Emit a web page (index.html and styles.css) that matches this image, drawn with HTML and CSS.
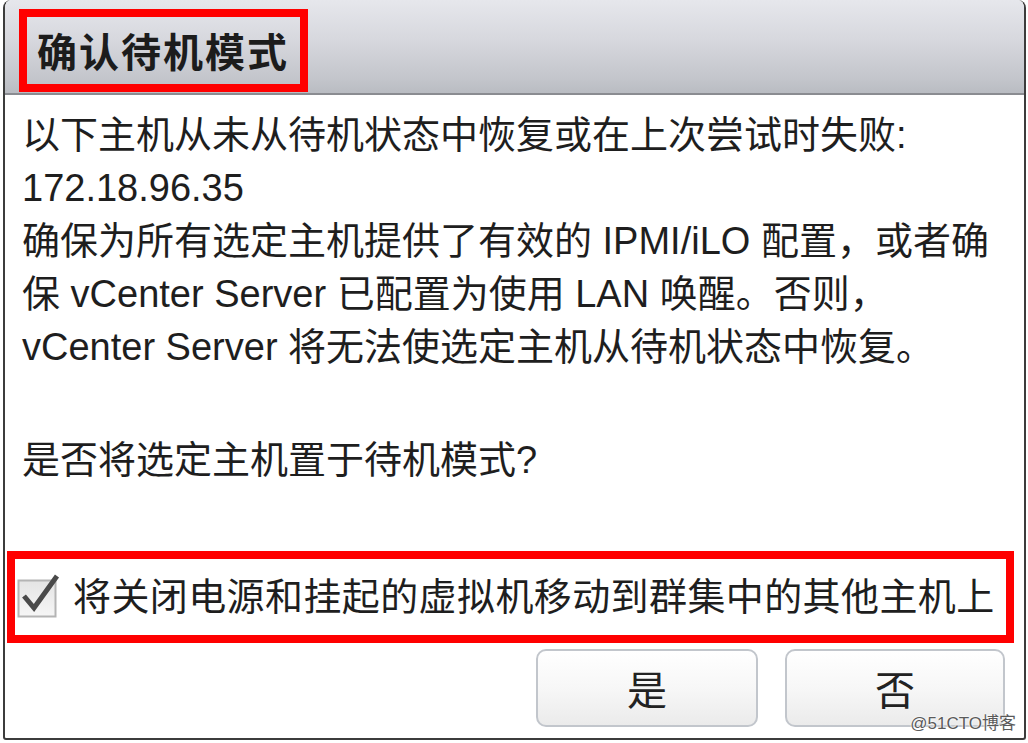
FILE: index.html
```html
<!DOCTYPE html>
<html lang="zh-CN">
<head>
<meta charset="utf-8">
<title>确认待机模式</title>
<link rel="stylesheet" href="styles.css">
</head>
<body>
<div class="window">
  <div class="titlebar">
    <div class="title-box">确认待机模式</div>
  </div>
  <div class="content">
    <div class="message">
      <div class="line">以下主机从未从待机状态中恢复或在上次尝试时失败:</div>
      <div class="line">172.18.96.35</div>
      <div class="line">确保为所有选定主机提供了有效的 IPMI/iLO 配置，或者确</div>
      <div class="line">保 vCenter Server 已配置为使用 LAN 唤醒。否则，</div>
      <div class="line">vCenter Server 将无法使选定主机从待机状态中恢复。</div>
    </div>
    <div class="question line">是否将选定主机置于待机模式?</div>
    <div class="check-box">
      <svg class="checkbox" width="44" height="46" viewBox="0 0 44 46">
        <defs>
          <linearGradient id="cbg" x1="0" y1="0" x2="0" y2="1">
            <stop offset="0" stop-color="#e4e4e4"/>
            <stop offset="1" stop-color="#f6f6f6"/>
          </linearGradient>
        </defs>
        <rect x="1.5" y="8.5" width="37" height="36" fill="url(#cbg)" stroke="#b4b4b4" stroke-width="2"/>
        <path d="M7 24 L17 36 L40 4" fill="none" stroke="#4a4a4a" stroke-width="5" stroke-linejoin="miter"/>
      </svg>
      <span class="check-label">将关闭电源和挂起的虚拟机移动到群集中的其他主机上</span>
    </div>
    <div class="buttons">
      <button class="btn btn-yes">是</button>
      <button class="btn btn-no">否</button>
    </div>
  </div>
  <div class="watermark">@51CTO博客</div>
</div>
</body>
</html>
```
FILE: styles.css
```css
html, body {
  margin: 0;
  padding: 0;
  background: #ffffff;
}
body {
  width: 1028px;
  height: 743px;
  overflow: hidden;
  font-family: "Liberation Sans", "Noto Sans CJK SC", sans-serif;
  color: #1e1e1e;
}
.window {
  position: relative;
  box-sizing: border-box;
  margin-left: 3px;
  width: 1023px;
  height: 740px;
  border: 2px solid #3c3c3c;
  border-top: none;
  border-radius: 8px 8px 3px 3px;
  background: #ffffff;
  display: flex;
  flex-direction: column;
  overflow: hidden;
}
.titlebar {
  height: 95px;
  flex: none;
  box-sizing: border-box;
  border-bottom: 2px solid #8a8c91;
  background: linear-gradient(#e6e7ec 0%, #d6d7dd 45%, #c3c5cb 85%, #b9bcc2 100%);
  padding-left: 14px;
  padding-top: 9px;
}
.title-box {
  box-sizing: border-box;
  width: 289px;
  height: 83px;
  border: 8px solid #ff0000;
  padding-left: 10px;
  font-weight: bold;
  font-size: 40px;
  letter-spacing: 2px;
  line-height: 67px;
  color: #1c1c1c;
  font-family: "Noto Sans CJK SC", sans-serif;
}
.content {
  flex: 1;
  display: flex;
  flex-direction: column;
  padding-top: 14px;
}
.message {
  padding-left: 17px;
}
.line {
  font-size: 38px;
  line-height: 53px;
  white-space: nowrap;
}
.question {
  padding-left: 17px;
  margin-top: 60px;
}
.check-box {
  box-sizing: border-box;
  margin: 64px 10px 0 2px;
  height: 92px;
  border: 8px solid #ff0000;
  display: flex;
  align-items: center;
  padding-left: 2px;
}
.checkbox {
  flex: none;
  margin-top: -4px;
}
.check-label {
  margin-left: 12px;
  font-size: 38px;
  letter-spacing: 0.4px;
  white-space: nowrap;
  line-height: 53px;
}
.buttons {
  display: flex;
  justify-content: flex-end;
  gap: 27px;
  margin-top: 6px;
  padding-right: 19px;
}
.btn {
  box-sizing: border-box;
  width: 222px;
  height: 78px;
  border: 2px solid #c2c6cc;
  border-radius: 10px;
  background: linear-gradient(#ffffff 0%, #f7f7f7 50%, #ebebeb 100%);
  font-family: "Noto Sans CJK SC", sans-serif;
  font-size: 40px;
  color: #222;
  padding: 0;
}
.btn-no {
  width: 220px;
}
.watermark {
  position: absolute;
  right: 8px;
  bottom: 4px;
  font-size: 17px;
  color: #5a5a5a;
  font-family: "Liberation Sans", "Noto Sans CJK SC", sans-serif;
  text-shadow: 0 0 2px #fff, 0 0 2px #fff;
}
```
